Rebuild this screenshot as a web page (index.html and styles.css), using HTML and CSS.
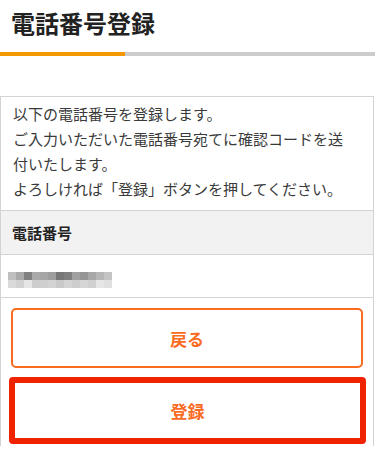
FILE: index.html
```html
<!DOCTYPE html>
<html lang="ja">
<head>
  <meta charset="utf-8">
  <link rel="stylesheet" href="styles.css">
</head>
<body>

  <div class="page-head">
    <h1 class="page-title">電話番号登録</h1>
  </div>
  <div class="progress"><div class="progress-bar"></div></div>

  <div class="confirm-box">
    <p class="confirm-text">以下の電話番号を登録します。<br>ご入力いただいた電話番号宛てに確認コードを送付いたします。<br>よろしければ「登録」ボタンを押してください。</p>
    <div class="field-label">電話番号</div>
    <div class="field-value"><div class="masked-number"></div></div>
    <div class="actions">
      <button type="button" class="btn btn-back">戻る</button>
      <button type="button" class="btn btn-submit">登録</button>
    </div>
  </div>

</body>
</html>
```

FILE: styles.css
```css
body {
  margin: 0;
  font-family: "Noto Sans CJK JP", "Noto Sans", sans-serif;
  color: #222;
  background: #fff;
}

/* Title + step bar */
.page-head {
  padding: 11px 11px 0;
}
.page-title {
  margin: 0;
  font-size: 24px;
  line-height: 24px;
  font-weight: bold;
  color: #222;
}

.progress {
  margin-top: 17px;
  height: 4px;
  background: #cccccc;
}
.progress-bar {
  width: 125px;
  height: 4px;
  background: #f39800;
}

/* Confirmation box */
.confirm-box {
  margin: 40px 1px 0 0;
  border: 1px solid #d3d3d3;
  border-bottom: none;
}

.confirm-text {
  margin: 0;
  padding: 4px 26px 9px 12px;
  font-size: 15px;
  line-height: 25px;
  color: #3a3a3a;
}

.field-label {
  border-top: 1px solid #d3d3d3;
  border-bottom: 1px solid #d3d3d3;
  background: #f2f2f2;
  padding: 0 11px;
  height: 43px;
  line-height: 43px;
  font-size: 15px;
  font-weight: bold;
  color: #222;
}

.field-value {
  height: 43px;
  border-bottom: 1px solid #d3d3d3;
  padding: 17px 0 0 7px;
  box-sizing: border-box;
}

/* blurred phone number */
.masked-number {
  width: 104px;
  height: 16px;
  background:
    linear-gradient(90deg,
      #bfbfbf 0 8px, #a9a9a9 8px 16px, #808080 16px 24px, #a9a9a9 24px 32px,
      #a6a6a6 32px 40px, #9e9e9e 40px 48px, #777 48px 56px, #7f7f7f 56px 64px,
      #a0a0a0 64px 72px, #959595 72px 80px, #a7a7a7 80px 88px, #b6b6b6 88px 96px,
      #c4c4c4 96px 104px) top / 104px 8px no-repeat,
    linear-gradient(90deg,
      #dadada 0 8px, #d2d2d2 8px 16px, #e6e6e6 16px 24px, #cdcdcd 24px 32px,
      #cfcfcf 32px 40px, #d3d3d3 40px 48px, #c9c9c9 48px 56px, #d4d4d4 56px 64px,
      #cdcdcd 64px 72px, #d6d6d6 72px 80px, #d0d0d0 80px 88px, #e6e6e6 88px 96px,
      #e0e0e0 96px 104px) bottom / 104px 8px no-repeat;
}

/* Buttons */
.actions {
  display: flex;
  flex-direction: column;
  padding: 10px 10px 2px;
}

.btn {
  display: block;
  font-family: inherit;
  font-size: 17px;
  font-weight: bold;
  color: #fa6b1f;
  background: #fff;
  cursor: pointer;
  padding: 0;
}

.btn-back {
  height: 60px;
  border: 2px solid #fa6b1f;
  border-radius: 5px;
}

.btn-submit {
  height: 67px;
  margin: 9px -3px 0 -2px;
  border: 6px solid #f02300;
  border-radius: 4px;
}
```
